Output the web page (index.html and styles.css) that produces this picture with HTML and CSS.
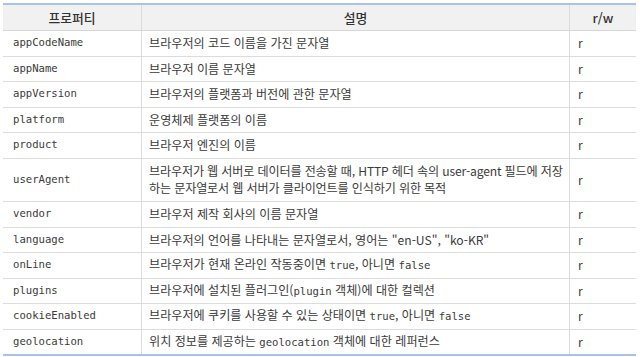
FILE: index.html
```html
<!DOCTYPE html>
<html lang="ko">
<head>
<meta charset="utf-8">
<title>navigator 프로퍼티</title>
<link rel="stylesheet" href="styles.css">
</head>
<body>
<table class="props">
  <thead>
    <tr><th class="c-name">프로퍼티</th><th class="c-desc">설명</th><th class="c-rw">r/w</th></tr>
  </thead>
  <tbody>
    <tr><td class="mono">appCodeName</td><td>브라우저의 코드 이름을 가진 문자열</td><td>r</td></tr>
    <tr><td class="mono">appName</td><td>브라우저 이름 문자열</td><td>r</td></tr>
    <tr><td class="mono">appVersion</td><td>브라우저의 플랫폼과 버전에 관한 문자열</td><td>r</td></tr>
    <tr><td class="mono">platform</td><td>운영체제 플랫폼의 이름</td><td>r</td></tr>
    <tr><td class="mono">product</td><td>브라우저 엔진의 이름</td><td>r</td></tr>
    <tr class="tall"><td class="mono">userAgent</td><td class="long">브라우저가 웹 서버로 데이터를 전송할 때, HTTP 헤더 속의 user-agent 필드에 저장<br>하는 문자열로서 웹 서버가 클라이언트를 인식하기 위한 목적</td><td>r</td></tr>
    <tr><td class="mono">vendor</td><td>브라우저 제작 회사의 이름 문자열</td><td>r</td></tr>
    <tr><td class="mono">language</td><td>브라우저의 언어를 나타내는 문자열로서, 영어는 "en-US", "ko-KR"</td><td>r</td></tr>
    <tr><td class="mono">onLine</td><td>브라우저가 현재 온라인 작동중이면 <span class="code">true</span>, 아니면 <span class="code">false</span></td><td>r</td></tr>
    <tr><td class="mono">plugins</td><td>브라우저에 설치된 플러그인(<span class="code">plugin</span> 객체)에 대한 컬렉션</td><td>r</td></tr>
    <tr><td class="mono">cookieEnabled</td><td>브라우저에 쿠키를 사용할 수 있는 상태이면 <span class="code">true</span>, 아니면 <span class="code">false</span></td><td>r</td></tr>
    <tr><td class="mono">geolocation</td><td>위치 정보를 제공하는 <span class="code">geolocation</span> 객체에 대한 레퍼런스</td><td>r</td></tr>
  </tbody>
</table>
</body>
</html>
```
FILE: styles.css
```css
html, body {
  margin: 0;
  padding: 0;
  background: #ffffff;
}

body {
  padding: 3px 6px 0 3px;
  font-family: "Noto Sans CJK KR", "Noto Sans", sans-serif;
  font-size: 12.1px;
  color: #3a3a3a;
}

.props {
  width: 631px;
  border-collapse: collapse;
  table-layout: fixed;
  border-top: 2px solid #a9c3e4;
  border-bottom: 2px solid #a9c3e4;
}

.props th {
  height: 25px;
  padding: 0;
  background: #f1f1f1;
  font-weight: 500;
  font-size: 12.8px;
  color: #333333;
  text-align: center;
  border-bottom: 1px solid #d6d6d6;
  border-left: 1px solid #dcdcdc;
}

.props th:first-child,
.props td:first-child {
  border-left: none;
}

.c-name { width: 138px; }
.c-desc { width: 427px; }
.c-rw { width: 66px; }

.props td {
  height: 25.5px;
  box-sizing: border-box;
  padding: 0 4px 1px 7px;
  line-height: 17px;
  text-align: left;
  vertical-align: middle;
  border-bottom: 1px solid #dcdcdc;
  border-left: 1px solid #dcdcdc;
  white-space: nowrap;
}

.props tbody tr:last-child td {
  border-bottom: none;
}

.props td:first-child {
  padding-left: 10px;
}

.props td:last-child {
  padding-left: 8px;
}

.props tr.tall td {
  height: 43.5px;
  padding-top: 3px;
  padding-bottom: 4px;
}

.props td.long {
  letter-spacing: -0.15px;
}

.mono,
.code {
  font-family: "DejaVu Sans Mono", "Liberation Mono", monospace;
  font-size: 10.6px;
  letter-spacing: 0;
}
```
